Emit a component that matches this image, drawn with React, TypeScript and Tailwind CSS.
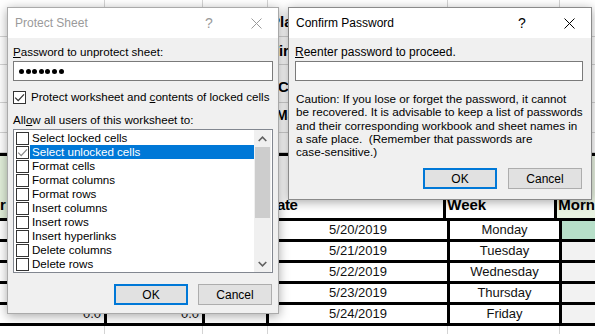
import type { ReactNode } from 'react'

const ui = { fontFamily: '"Liberation Sans", Arial, sans-serif' }

const upperRows = [
  { h: 'h-[37px]', text: 'Pla', pad: 'pl-[2px] pt-[15px] text-[15px]' },
  { h: 'h-[28px]', text: 'Tir', pad: 'pl-[2px] pt-[7px] text-[15px]' },
  { h: 'h-[38px]', text: 'Co', pad: 'pl-[10px] pt-[15px] text-[15px]' },
  { h: 'h-[30px]', text: 'Ma', pad: 'pl-[8px] pt-[6px] text-[14px]' },
  { h: 'h-[20px]', text: '', pad: '' },
]

const days = [
  ['5/20/2019', 'Monday'],
  ['5/21/2019', 'Tuesday'],
  ['5/22/2019', 'Wednesday'],
  ['5/23/2019', 'Thursday'],
  ['5/24/2019', 'Friday'],
]

const perms = [
  'Select locked cells',
  'Select unlocked cells',
  'Format cells',
  'Format columns',
  'Format rows',
  'Insert columns',
  'Insert rows',
  'Insert hyperlinks',
  'Delete columns',
  'Delete rows',
]

function Tick({ color }: { color: string }) {
  return (
    <svg width="11" height="11" viewBox="0 0 11 11">
      <path d="M1.2 5.6 L4.2 8.6 L10 2.4" fill="none" stroke={color} strokeWidth="1.3" />
    </svg>
  )
}

function CloseX({ color }: { color: string }) {
  return (
    <svg width="11" height="11" viewBox="0 0 11 11">
      <path d="M0.5 0.5 L10.5 10.5 M10.5 0.5 L0.5 10.5" stroke={color} strokeWidth="1" />
    </svg>
  )
}

function Chevron({ up }: { up?: boolean }) {
  return (
    <svg width="9" height="6" viewBox="0 0 9 6">
      <path d={up ? 'M0.7 5 L4.5 1.2 L8.3 5' : 'M0.7 1 L4.5 4.8 L8.3 1'} fill="none" stroke="#606060" strokeWidth="1.6" />
    </svg>
  )
}

function Button({ children, primary }: { children: ReactNode; primary?: boolean }) {
  return (
    <div
      className={
        'flex h-[21px] w-[74px] items-center justify-center bg-[#e1e1e1] text-[12px] text-black ' +
        (primary ? 'border-2 border-[#0078d7]' : 'border border-[#adadad]')
      }
    >
      {children}
    </div>
  )
}

function TitleBar({ title, active }: { title: string; active?: boolean }) {
  const c = active ? '#000000' : '#9a9a9a'
  return (
    <div className="flex h-[30px] items-center bg-white pl-[7px]">
      <span className="text-[12px]" style={{ color: c }}>
        {title}
      </span>
      <div className="ml-auto flex items-center">
        <span className="w-[30px] text-center text-[14px]" style={{ color: c }}>
          ?
        </span>
        <span className="ml-[10px] flex w-[44px] justify-center">
          <CloseX color={c} />
        </span>
      </div>
    </div>
  )
}

function Sheet() {
  return (
    <div className="flex flex-col bg-white">
      {upperRows.map((r, i) => (
        <div key={i} className={'flex border-b border-[#d4d4d4] last:border-b-0 ' + r.h}>
          <div className="w-[105px] border-r border-[#d4d4d4]" />
          <div className="w-[98px] border-r border-[#d4d4d4]" />
          <div className="w-[65px] border-r border-[#d4d4d4]" />
          <div className={'w-[180px] border-r border-[#d4d4d4] font-bold leading-[13px] ' + r.pad}>{r.text}</div>
          <div className="w-[112px] border-r border-[#d4d4d4]" />
          <div className="flex-1" />
        </div>
      ))}

      <div className="flex h-[65px] border-t-[3px] border-black text-[15px] font-bold leading-[18px]">
        <div className="flex w-[104px] items-end bg-[#e2efda] pb-[4px]">r</div>
        <div className="w-[98px] border-l-[3px] border-black bg-[#e2efda]" />
        <div className="w-[64px] border-l-[3px] border-black bg-[#e2efda]" />
        <div className="flex w-[181px] items-end border-l-[3px] border-black pb-[4px] tracking-[-0.5px]">Date</div>
        <div className="flex w-[112px] items-end border-l-[3px] border-black pb-[4px] pl-[1px]">Week</div>
        <div className="flex flex-1 items-end border-l-[3px] border-black bg-[#e9f3e2] pb-[4px] pl-[1px]">Morn</div>
      </div>

      {days.map(([d, w], i) => (
        <div key={d} className="flex h-[21px] border-t-[3px] border-black text-[13px] leading-[18px] text-[#111]">
          <div className="w-[104px] pr-[3px] text-right">{i === 4 ? '0.0' : ''}</div>
          <div className="w-[98px] border-l-[3px] border-black pr-[3px] text-right">{i === 4 ? '0.0' : ''}</div>
          <div className="w-[64px] border-l-[3px] border-black" />
          <div className="w-[181px] border-l-[3px] border-black text-center">{d}</div>
          <div className="w-[112px] border-l-[3px] border-black text-center">{w}</div>
          <div className={'flex-1 border-l-[3px] border-black ' + (i === 0 ? 'bg-[#b7dfc9]' : 'bg-[#f2f2f2]')} />
        </div>
      ))}

      <div className="flex h-[11px] border-t-[3px] border-black">
        <div className="w-[105px] border-r border-[#d4d4d4]" />
        <div className="w-[98px] border-r border-[#d4d4d4]" />
        <div className="w-[65px] border-r border-[#d4d4d4]" />
        <div className="w-[180px] border-r border-[#d4d4d4]" />
        <div className="w-[112px] border-r border-[#d4d4d4]" />
        <div className="flex-1" />
      </div>
    </div>
  )
}

function ProtectSheet() {
  return (
    <div className="absolute left-[7px] top-[7px] flex h-[307px] w-[272px] flex-col border border-[#aaaaaa] bg-[#f0f0f0] shadow-[0_2px_10px_rgba(0,0,0,0.35)]">
      <TitleBar title="Protect Sheet" />
      <div className="flex flex-col px-[5px] text-[11.6px] leading-[16px] text-black">
        <div className="mt-[6px]">
          <span className="underline">P</span>assword to unprotect sheet:
        </div>
        <div className="mt-[1px] flex h-[20px] w-[260px] items-center gap-[1.6px] border border-[#7a7a7a] bg-white pl-[5px]">
          {Array.from({ length: 7 }).map((_, i) => (
            <span key={i} className="h-[5px] w-[5px] rounded-full bg-black" />
          ))}
        </div>
        <div className="mt-[8px] flex items-center">
          <span className="flex h-[13px] w-[13px] items-center justify-center border border-[#333333] bg-white">
            <Tick color="#333333" />
          </span>
          <span className="ml-[5px]">
            Protect worksheet and <span className="underline">c</span>ontents of locked cells
          </span>
        </div>
        <div className="mt-[7px]">
          All<span className="underline">o</span>w all users of this worksheet to:
        </div>
        <div className="mt-[1px] flex h-[144px] w-[260px] border border-[#828790] bg-white">
          <div className="flex w-[240px] flex-col pt-[1px]">
            {perms.map((p, i) => (
              <div key={p} className="flex h-[14px] items-center pl-[2px]">
                <span className="flex h-[13px] w-[13px] shrink-0 items-center justify-center border border-[#333333] bg-white">
                  {i === 1 && <Tick color="#888888" />}
                </span>
                <span
                  className={
                    'ml-[1px] flex h-[14px] flex-1 items-center pl-[2px] ' +
                    (i === 1 ? 'bg-[#0078d7] text-white' : '')
                  }
                >
                  {p}
                </span>
              </div>
            ))}
          </div>
          <div className="flex w-[17px] flex-col bg-[#f0f0f0]">
            <div className="flex h-[17px] items-center justify-center">
              <Chevron up />
            </div>
            <div className="mx-[1px] h-[71px] bg-[#cdcdcd]" />
            <div className="mt-auto flex h-[17px] items-center justify-center">
              <Chevron />
            </div>
          </div>
        </div>
        <div className="mt-[11px] flex justify-end gap-[10px] pr-[1px]">
          <Button primary>OK</Button>
          <Button>Cancel</Button>
        </div>
      </div>
    </div>
  )
}

function ConfirmPassword() {
  return (
    <div className="absolute left-[288px] top-[7px] flex h-[193px] w-[304px] flex-col border border-[#8a8a8a] bg-[#f0f0f0] shadow-[0_2px_10px_rgba(0,0,0,0.35)]">
      <TitleBar title="Confirm Password" active />
      <div className="flex flex-col px-[6px] text-[12px] leading-[16px] text-black">
        <div className="mt-[6px]">
          <span className="underline">R</span>eenter password to proceed.
        </div>
        <div className="mt-[1px] h-[20px] w-[288px] border border-[#7a7a7a] bg-white" />
        <p className="mt-[11px] whitespace-nowrap pl-[1px] text-[11.7px] leading-[13.3px]">
          Caution: If you lose or forget the password, it cannot
          <br />
          be recovered. It is advisable to keep a list of passwords
          <br />
          and their corresponding workbook and sheet names in
          <br />
          a safe place.&nbsp; (Remember that passwords are
          <br />
          case-sensitive.)
        </p>
        <div className="mt-[10px] flex justify-end gap-[11px] pr-[3px]">
          <Button primary>OK</Button>
          <Button>Cancel</Button>
        </div>
      </div>
    </div>
  )
}

export default function App() {
  return (
    <div className="relative h-[334px] w-[595px] overflow-hidden bg-white" style={ui}>
      <Sheet />
      <ProtectSheet />
      <ConfirmPassword />
    </div>
  )
}
